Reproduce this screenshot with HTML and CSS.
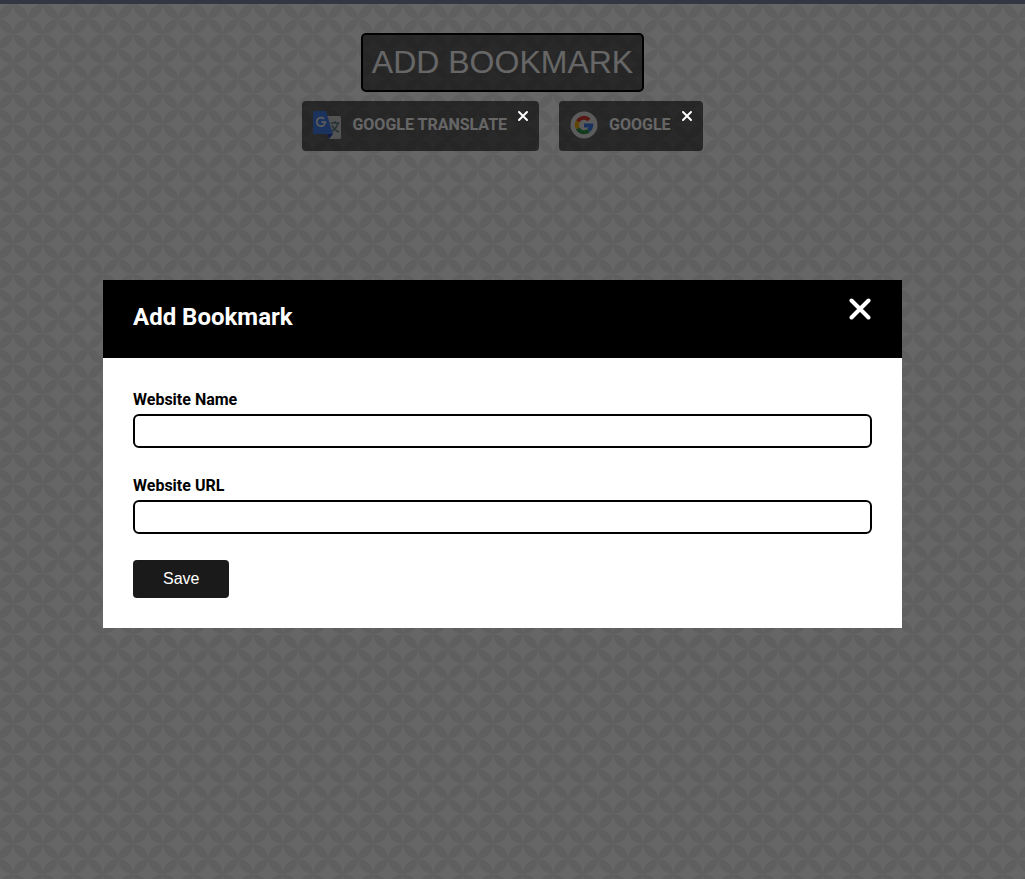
FILE: index.html
```html
<!DOCTYPE html>
<html lang="en">
<head>
<meta charset="utf-8">
<meta name="viewport" content="width=device-width, initial-scale=1">
<title>Bookmarks</title>
<link rel="stylesheet" href="styles.css">
</head>
<body>
<div class="topbar"></div>
<main class="page">
  <button class="add-button" type="button">ADD BOOKMARK</button>
  <div class="bookmarks">
    <div class="bookmark">
      <svg class="bookmark-icon" viewBox="0 0 28 28" aria-hidden="true">
        <path d="M11 5h15.500q1.500 0 1.500 1.500v20q0 1.500-1.500 1.500H16z" fill="#cfcfcf"/>
        <path d="M14 23h6l-4 5z" fill="#2d46a8"/>
        <path d="M17.500 12h9M22 10v2M25 12q-1 5-7 9M19 14q2 5 7 7" fill="none" stroke="#5d7d88" stroke-width="1.500"/>
        <path d="M1.500 0H13l7 23H1.500Q0 23 0 21.500v-20Q0 0 1.500 0z" fill="#447fe6"/>
        <path d="M11 7.800a4.300 4.300 0 1 0 1.300 3.400H8.500" fill="none" stroke="#e8e8e8" stroke-width="1.700"/>
      </svg>
      <a class="bookmark-link" href="#">GOOGLE TRANSLATE</a>
      <button class="remove" type="button" aria-label="Remove Google Translate">
        <svg class="remove-icon" viewBox="0 0 12 12" aria-hidden="true"><path d="M2 2l8 8M10 2l-8 8"/></svg>
      </button>
    </div>
    <div class="bookmark">
      <svg class="bookmark-icon" viewBox="0 0 28 28" aria-hidden="true">
        <circle cx="14" cy="14" r="13.500" fill="#e4e4e4"/>
        <g fill="none" stroke-width="4">
          <path d="M19.100 8.900A7.200 7.200 0 0 0 7.800 10.400" stroke="#d93a2d"/>
          <path d="M7.800 10.400a7.200 7.200 0 0 0 0 7.200" stroke="#eeb005"/>
          <path d="M7.800 17.600a7.200 7.200 0 0 0 10.900 2" stroke="#2b9448"/>
          <path d="M18.700 19.600a7.200 7.200 0 0 0 2.500-5H14" stroke="#3d7be5"/>
        </g>
      </svg>
      <a class="bookmark-link" href="#">GOOGLE</a>
      <button class="remove" type="button" aria-label="Remove Google">
        <svg class="remove-icon" viewBox="0 0 12 12" aria-hidden="true"><path d="M2 2l8 8M10 2l-8 8"/></svg>
      </button>
    </div>
  </div>
</main>
<div class="overlay">
  <section class="modal" role="dialog" aria-modal="true" aria-labelledby="modal-title">
    <header class="modal-header">
      <h2 class="modal-title" id="modal-title">Add Bookmark</h2>
      <button class="close" type="button" aria-label="Close">
        <svg class="close-icon" viewBox="0 0 22 22" aria-hidden="true"><path d="M2.500 2.500l17 17M19.500 2.500l-17 17"/></svg>
      </button>
    </header>
    <form class="modal-form">
      <div class="field">
        <label class="field-label" for="site-name">Website Name</label>
        <input class="field-input" id="site-name" type="text">
      </div>
      <div class="field">
        <label class="field-label" for="site-url">Website URL</label>
        <input class="field-input" id="site-url" type="text">
      </div>
      <button class="save" type="button">Save</button>
    </form>
  </section>
</div>
</body>
</html>
```
FILE: styles.css
```css
* { box-sizing: border-box; }

body {
  margin: 0;
  min-height: 100vh;
  font-family: Roboto, "Liberation Sans", sans-serif;
  font-size: 16px;
  background-color: #fff;
  background-image: url("data:image/svg+xml,%3Csvg xmlns='http://www.w3.org/2000/svg' width='30' height='30'%3E%3Cpath fill='%23eeeeee' d='M0 0A15 15 0 0 1 15 15A15 15 0 0 1 0 0M30 0A15 15 0 0 1 15 15A15 15 0 0 1 30 0M0 30A15 15 0 0 1 15 15A15 15 0 0 1 0 30M30 30A15 15 0 0 1 15 15A15 15 0 0 1 30 30'/%3E%3C/svg%3E");
  background-position: 13px 4px;
}

button { font-family: "Liberation Sans", Arial, sans-serif; cursor: pointer; }

.topbar { height: 4px; background: #333744; position: relative; z-index: 4; }

.page {
  display: flex;
  flex-direction: column;
  align-items: center;
  gap: 9px;
  padding: 29px 20px 20px 0;
}

.add-button {
  padding: 9px;
  border: 2px solid #000;
  border-radius: 5px;
  background: rgba(0, 0, 0, .6);
  color: #fff;
  font-size: 32px;
  line-height: 37px;
}

.bookmarks { display: flex; flex-wrap: wrap; justify-content: center; gap: 20px; }

.bookmark {
  position: relative;
  display: flex;
  gap: 11px;
  padding: 10px 32px 12px 11px;
  border-radius: 4px;
  background: rgba(0, 0, 0, .6);
}

.bookmark-icon { width: 28px; height: 28px; }

.bookmark-link {
  color: #fff;
  font-weight: 700;
  line-height: 28px;
  text-decoration: none;
}

.remove, .close { display: flex; padding: 0; border: 0; background: none; }

.remove { position: absolute; top: 9px; right: 10px; z-index: 3; }

.remove-icon { width: 12px; height: 12px; fill: none; stroke: #fff; stroke-width: 2; stroke-linecap: round; }

.overlay {
  position: fixed;
  inset: 0;
  z-index: 2;
  display: flex;
  align-items: center;
  justify-content: center;
  padding: 28px 20px 0 0;
  background: rgba(0, 0, 0, .6);
}

.modal { width: 90%; max-width: 799px; background: #fff; }

.modal-header {
  display: flex;
  align-items: flex-start;
  justify-content: space-between;
  padding: 18px 31px 26px 30px;
  background: #000;
  color: #fff;
}

.modal-title { margin: 0; padding-top: 4px; font-size: 24px; line-height: 30px; }

.close-icon { width: 22px; height: 22px; fill: none; stroke: #fff; stroke-width: 4; stroke-linecap: round; }

.modal-form { padding: 30px; }

.field { margin-bottom: 26px; }

.field-label { display: block; margin-bottom: 2px; font-weight: 700; line-height: 24px; }

.field-input {
  display: block;
  width: 100%;
  height: 34px;
  padding: 0 8px;
  border: 2px solid #000;
  border-radius: 6px;
  background: #fff;
  font: inherit;
}

.save {
  display: block;
  padding: 10px 30px;
  border: 0;
  border-radius: 4px;
  background: #1a1a1a;
  color: #fff;
  font-size: 16px;
  line-height: 18px;
}
```
